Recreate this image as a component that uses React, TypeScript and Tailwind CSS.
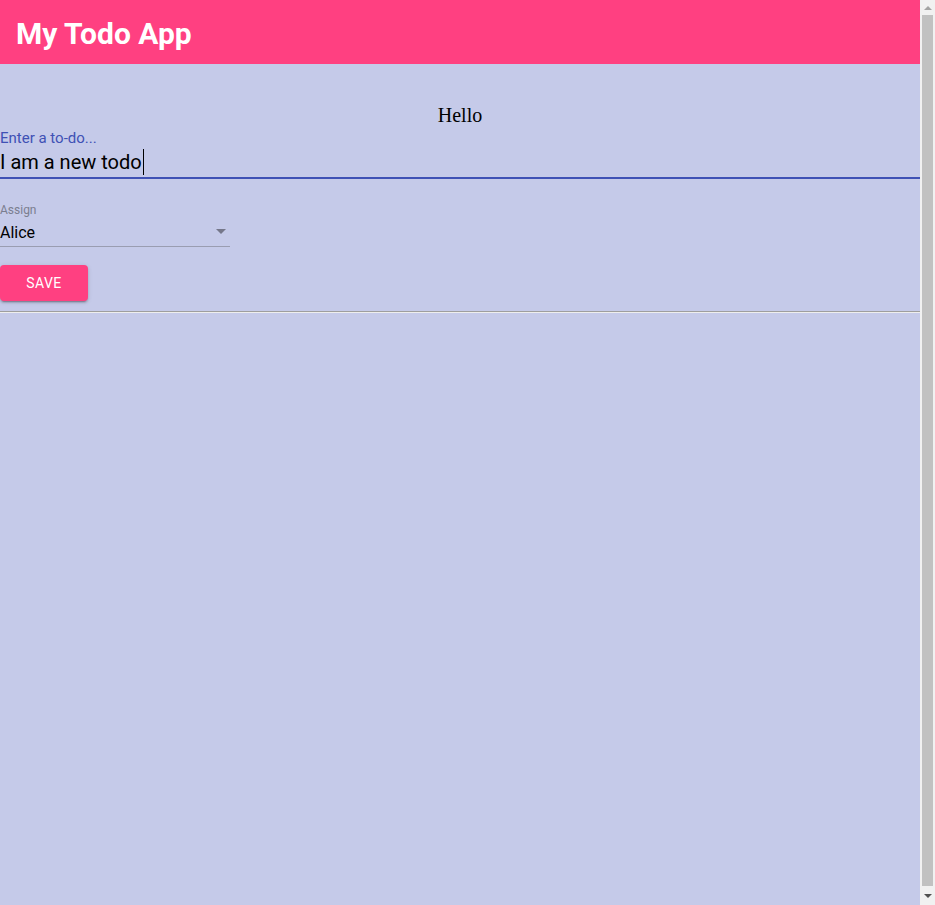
function Scrollbar() {
  return (
    <div className="flex w-[15px] shrink-0 flex-col items-center bg-[#f1f1f1]">
      <div className="flex h-[15px] w-full items-center justify-center">
        <svg width="8" height="4" viewBox="0 0 8 4">
          <path d="M0 4h8L4 0z" fill="#a3a3a3" />
        </svg>
      </div>
      <div className="h-[871px] w-[11px] bg-[#c1c1c1]" />
      <div className="flex h-[19px] w-full items-center justify-center">
        <svg width="8" height="4" viewBox="0 0 8 4">
          <path d="M0 0h8L4 4z" fill="#505050" />
        </svg>
      </div>
    </div>
  );
}

export default function App() {
  return (
    <div className="flex h-[905px] overflow-hidden bg-[#c5cae9] font-['Roboto',sans-serif]">
      <div className="min-w-0 flex-1">
        <header className="flex h-16 items-center bg-[#ff4081] px-4 pt-[3px]">
          <h1 className="text-[30px] font-bold leading-none text-white">My Todo App</h1>
        </header>

        <main>
          <p className="pt-10 text-center font-['Liberation_Serif',serif] text-[20px] leading-[23px] text-black">
            Hello
          </p>

          <div className="mt-[3px]">
            <label className="block text-[15px] leading-[17px] text-[#3f51b5]">Enter a to-do...</label>
            <div className="flex h-8 items-center border-b-2 border-[#3f51b5] text-[20px] text-black">
              <span>I am a new todo</span>
              <span className="ml-px h-[26px] w-px bg-black" />
            </div>
          </div>

          <div className="mt-[24px] w-[230px]">
            <label className="block text-[12px] leading-[14px] text-[#7b7e8f]">Assign</label>
            <div className="relative flex h-[30px] items-center border-b border-[#9a9db1] pt-[3px] text-[16px] text-black">
              <span>Alice</span>
              <svg
                className="absolute right-[4px] top-[12px]"
                width="10"
                height="5"
                viewBox="0 0 10 5"
              >
                <path d="M0 0h10L5 5z" fill="#75778a" />
              </svg>
            </div>
          </div>

          <button className="mt-[18px] flex h-9 w-[88px] items-center justify-center rounded bg-[#ff4081] text-[14px] font-normal uppercase tracking-[0.4px] text-white shadow-[0_3px_1px_-2px_rgba(0,0,0,0.2),0_2px_2px_0_rgba(0,0,0,0.14),0_1px_5px_0_rgba(0,0,0,0.12)]">
            Save
          </button>

          <hr className="mt-[10px] border-t border-b border-t-[#9e9e9e] border-b-[#eeeeee]" />
        </main>
      </div>
      <Scrollbar />
    </div>
  );
}
